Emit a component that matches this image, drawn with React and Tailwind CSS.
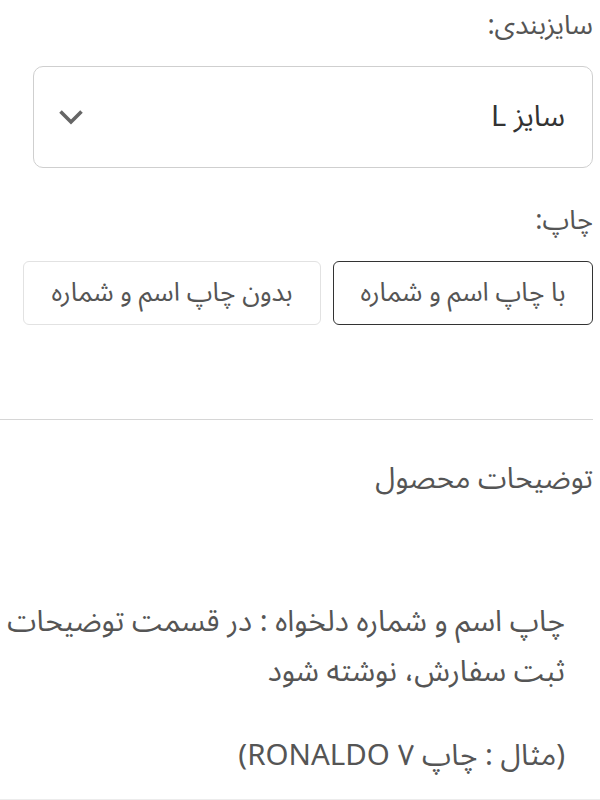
import React, { useState } from "react";

const font = { fontFamily: '"Noto Sans Arabic", Roboto, "Noto Sans", sans-serif' };

export default function App() {
  const [chap, setChap] = useState("ba");

  return (
    <div dir="rtl" style={font} className="w-[600px] h-[800px] bg-white overflow-hidden text-[#555] flex flex-col">
      <div className="pr-[7px] flex-1">
        <div className="pt-[4px] text-[27px] leading-[44px]">سایزبندی:</div>

        <div className="mt-[18px] ml-[33px] h-[102px] rounded-[10px] border border-[#cfcfcf] flex items-center justify-between pr-[27px] pl-[24px]">
          <span className="text-[29px] text-[#333]">سایز L</span>
          <svg width="26" height="16" viewBox="0 0 26 16">
            <path d="M2.5 2.5 L13 13 L23.5 2.5" fill="none" stroke="#666" strokeWidth="3.6" strokeLinejoin="miter" />
          </svg>
        </div>

        <div className="mt-[31px] text-[27px] leading-[44px]">چاپ:</div>

        <div className="mt-[18px] flex gap-[12px] pl-[16px]">
          <button
            onClick={() => setChap("ba")}
            className={
              "w-[260px] h-[64px] rounded-[6px] text-[26px] leading-none text-[#555] " +
              (chap === "ba" ? "border-[1.5px] border-[#333]" : "border border-[#e2e2e2]")
            }
          >
            با چاپ اسم و شماره
          </button>
          <button
            onClick={() => setChap("bedoon")}
            className={
              "w-[298px] h-[64px] rounded-[6px] text-[26px] leading-none text-[#555] " +
              (chap === "bedoon" ? "border-[1.5px] border-[#333]" : "border border-[#e2e2e2]")
            }
          >
            بدون چاپ اسم و شماره
          </button>
        </div>

        <div className="mt-[94px] h-px bg-[#d6d6d6]" />

        <div className="mt-[37px] text-[29px] leading-[44px]">توضیحات محصول</div>

        <div className="mt-[96px] pr-[28px] text-[29.5px] leading-[50px] whitespace-nowrap">
          <p>
            چاپ اسم و شماره دلخواه : در قسمت توضیحات
            <br />
            ثبت سفارش، نوشته شود
          </p>
          <p className="mt-[34px]">(مثال : چاپ ۷ RONALDO)</p>
        </div>
      </div>
      <div className="h-px bg-[#ececec]" />
    </div>
  );
}
